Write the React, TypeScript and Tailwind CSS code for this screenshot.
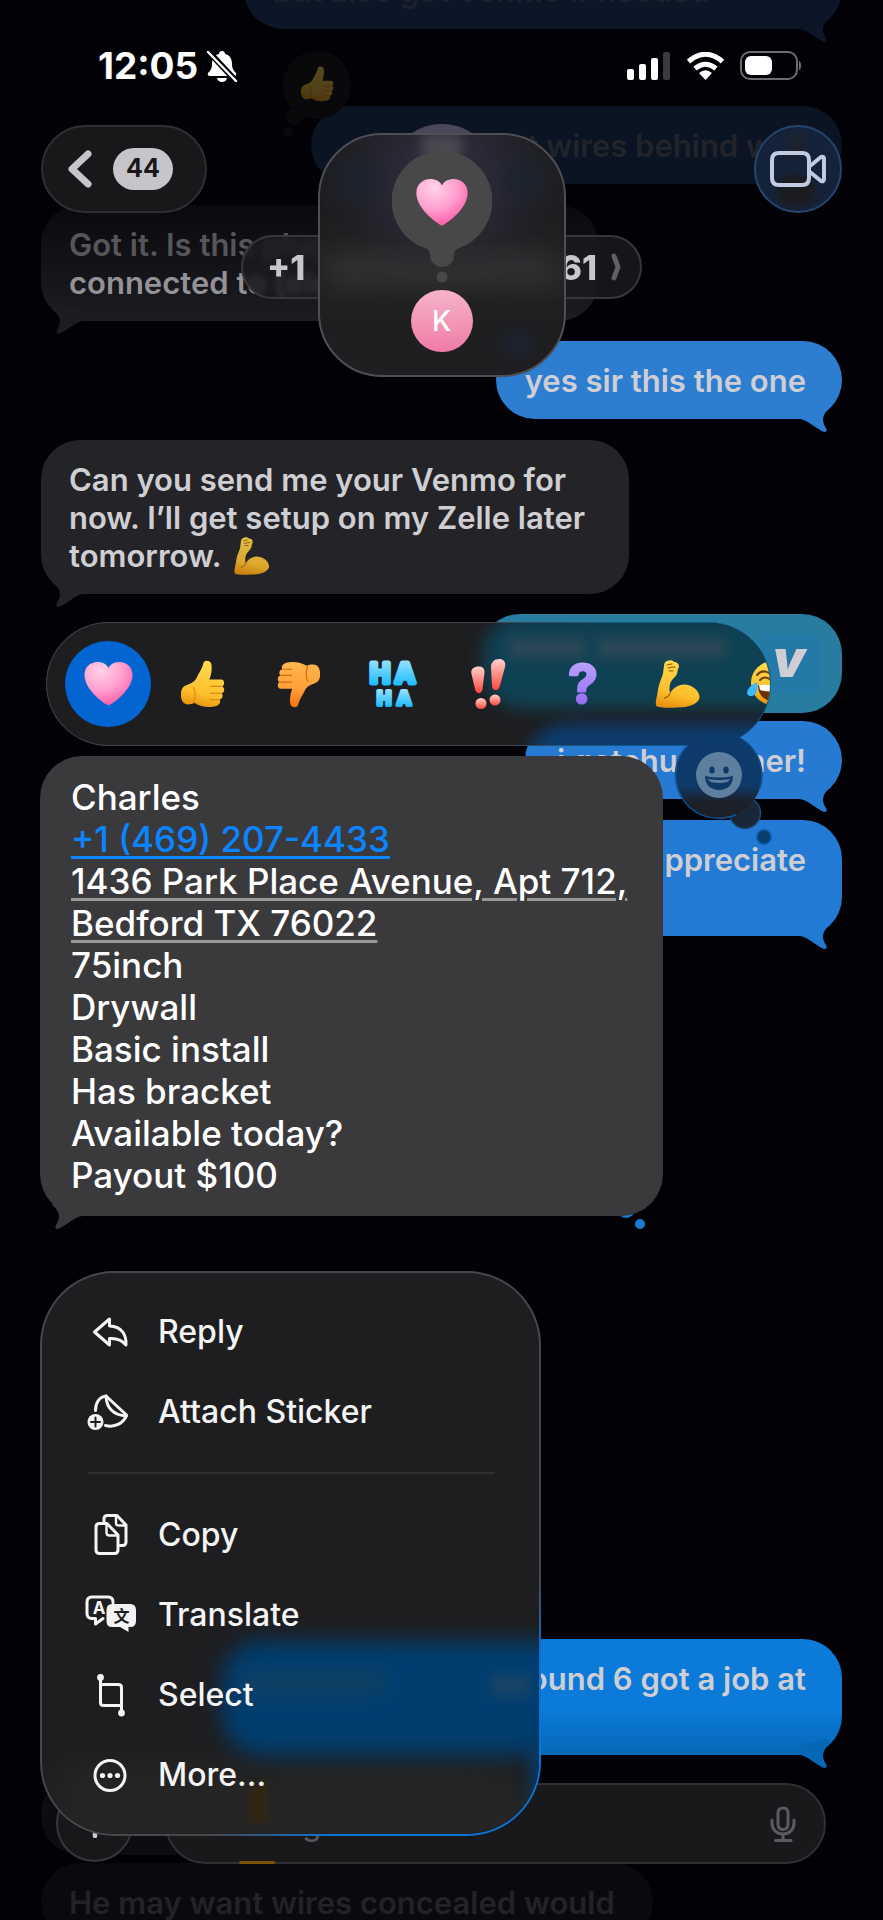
import clsx from "clsx";
import React from "react";

type BubbleProps = {
  children?: React.ReactNode;
  className?: string;
  side: "left" | "right";
  tail?: boolean;
  tailClassName?: string;
};

const Bubble: React.FC<BubbleProps> = (props) => {
  const isRight = props.side === "right";
  return (
    <div
      className={clsx(
        "relative shrink-0 rounded-[39px] pt-[21px] pb-[19px] text-[31px] leading-[38px] font-semibold whitespace-nowrap",
        isRight ? "self-end pr-9 pl-[29px]" : "self-start px-7",
        props.className,
      )}
    >
      {props.children}
      {props.tail !== false && (
        <svg
          className={clsx(
            "absolute -bottom-[13px] h-[30px] w-11",
            isRight ? "right-0" : "left-0 -scale-x-100",
            props.tailClassName,
          )}
          viewBox="0 0 44 30"
          fill="currentColor"
        >
          <path d="M2 17C10 18 18 27 26 30Q30 30 28 26C24 20 23 13 32 6L28 0L2 8Z" />
        </svg>
      )}
    </div>
  );
};

const Gradients: React.FC = () => (
  <svg className="absolute h-0 w-0" aria-hidden="true">
    <defs>
      <radialGradient id="pink" cx="0.35" cy="0.2" r="0.9">
        <stop offset="0" stopColor="#ffd3e6" />
        <stop offset="0.5" stopColor="#ff9fcf" />
        <stop offset="1" stopColor="#fb4e9c" />
      </radialGradient>
      <linearGradient id="yellow" x1="0.6" y1="0" x2="0.4" y2="1">
        <stop offset="0" stopColor="#ffdc4f" />
        <stop offset="0.7" stopColor="#fdbf2d" />
        <stop offset="1" stopColor="#e8920c" />
      </linearGradient>
      <linearGradient id="orange" x1="0.5" y1="1" x2="0.5" y2="0">
        <stop offset="0" stopColor="#ffb84d" />
        <stop offset="0.6" stopColor="#ff9f38" />
        <stop offset="1" stopColor="#f0740f" />
      </linearGradient>
      <linearGradient id="cyan" x1="0" y1="0" x2="0" y2="1">
        <stop offset="0" stopColor="#a5e6ff" />
        <stop offset="1" stopColor="#05b4ff" />
      </linearGradient>
      <linearGradient id="red" x1="0" y1="0" x2="0" y2="1">
        <stop offset="0" stopColor="#ffd2cb" />
        <stop offset="0.6" stopColor="#ff8076" />
        <stop offset="1" stopColor="#ff4438" />
      </linearGradient>
      <linearGradient id="purple" x1="0" y1="0" x2="0" y2="1">
        <stop offset="0" stopColor="#c3b0ff" />
        <stop offset="1" stopColor="#8a5cf0" />
      </linearGradient>
      <linearGradient id="bump" x1="0" y1="0" x2="0" y2="1">
        <stop offset="0" stopColor="#0d3b6c" />
        <stop offset="0.62" stopColor="#0e3a68" />
        <stop offset="0.82" stopColor="#1d2027" />
        <stop offset="1" stopColor="#1d2027" />
      </linearGradient>
    </defs>
  </svg>
);

const Heart: React.FC<{ className?: string }> = (props) => (
  <svg className={props.className} viewBox="0 0 48 44" fill="url(#pink)">
    <path d="M24 43.5C20 42 0 28 0 13C0 5 6 0 13 0C18 0 22 2 24 6C26 2 30 0 35 0C42 0 48 5 48 13C48 28 28 42 24 43.5Z" />
  </svg>
);

const Thumb: React.FC<{ className?: string; down?: boolean }> = (props) => (
  <svg className={props.className} viewBox="0 0 45 49">
    <path
      fill={props.down ? "url(#orange)" : "url(#yellow)"}
      d="M3 27C8 24 13 24 16 18C19 12 22 8 23 3C24-.5 30 0 31 4C32 9 31 15 29 20L41 20C45 20 45 26 42 27C45 28 45 33 41.500 34C43.500 36 42.500 40 39.500 40.500C41 43 39 46 36 47C30 49 20 48.500 14 44C9 46 4 46 2 43C-1 39-1 30 3 27Z"
    />
    <path
      d="M30 27H41M30 34H41M30 40.500H39M13 28Q16 36 13 43"
      fill="none"
      stroke={props.down ? "#d9640a" : "#dd8b10"}
      strokeLinecap="round"
      strokeWidth="1.2"
    />
  </svg>
);

const Bicep: React.FC<{ className?: string }> = (props) => (
  <svg className={props.className} viewBox="0 0 46 49">
    <path
      fill="url(#yellow)"
      d="M9 4C10 0 17-1 19 2C24 2 25 7 23 9L22 14C20 18 16 20 15 24C14 28 14 31 15 34C18 28 24 25 30 25C39 26 45 32 45 38C44 45 34 48.500 22 48.500C14 49 4 49 1 47C-1 45 2 36 3 28C5 20 8 16 8 11Z"
    />
    <path
      d="M12 5L17 4M13 8L20 7M14 11L18 11M15 34Q13 38 9 39"
      fill="none"
      stroke="#a8680a"
      strokeLinecap="round"
      strokeWidth="1.3"
    />
  </svg>
);

const HaHa: React.FC = () => (
  <svg className="h-[50px] w-[50px]" viewBox="0 0 50 50">
    <g
      fill="url(#cyan)"
      fontFamily="Inter, sans-serif"
      fontWeight="700"
      stroke="url(#cyan)"
      strokeLinecap="round"
      strokeLinejoin="round"
    >
      <text x="2" y="24" fontSize="27" strokeWidth="5">
        H
      </text>
      <text x="27" y="24" fontSize="27" strokeWidth="5">
        A
      </text>
      <text x="9" y="46" fontSize="19" strokeWidth="4">
        H
      </text>
      <text x="29" y="46" fontSize="19" strokeWidth="4">
        A
      </text>
    </g>
  </svg>
);

const Bangs: React.FC = () => (
  <svg className="h-[52px] w-10" viewBox="0 0 40 52" fill="url(#red)">
    <path d="M10 8.500C14.500 8 17 10.500 16.500 15L14.500 31C14 36.500 8 36.500 7 31L3.500 16C2.500 11.500 5 9 10 8.500Z" />
    <path d="M32 1C36.500 1.500 38 5 37 9L31.500 29C30 33.500 24 33 24 28L23 9C23 4 27 .500 32 1Z" />
    <circle cx="13" cy="45.500" r="5.500" />
    <circle cx="27" cy="42" r="5.500" />
  </svg>
);

const Question: React.FC = () => (
  <svg className="h-[52px] w-10" viewBox="0 0 40 52">
    <text
      x="20"
      y="45"
      fill="url(#purple)"
      fontFamily="Inter, sans-serif"
      fontSize="54"
      fontWeight="600"
      stroke="url(#purple)"
      strokeLinejoin="round"
      strokeWidth="3"
      textAnchor="middle"
    >
      ?
    </text>
  </svg>
);

const Laugh: React.FC = () => (
  <svg className="h-12 w-14" viewBox="0 0 56 48">
    <circle cx="28" cy="23" r="22" fill="url(#yellow)" />
    <path
      d="M12 15Q17 9 24 13M15 20Q20 15 26 20M32 13Q39 9 44 15"
      fill="none"
      stroke="#6b3f06"
      strokeLinecap="round"
      strokeWidth="2"
    />
    <path d="M13 25H43C43 36 37 41 28 41C19 41 13 35 13 25Z" fill="#6b3208" />
    <path d="M14 25H42V30Q28 33 15 30Z" fill="#fff" />
    <path d="M12 22C13 29 12 36 6 36C0 36 0 28 12 22Z" fill="#3db8f8" />
  </svg>
);

const StatusBar: React.FC = () => (
  <div className="flex h-[125px] items-start justify-between pt-[45px] pr-[81px] pl-[98px] text-white">
    <div className="flex items-center gap-2">
      <span className="text-[37px] leading-[42px] font-bold">12:05</span>
      <svg className="h-8 w-8" viewBox="0 0 32 32">
        <path
          d="M16 1C18 1 19 2 19 4C24 5 26 9 26 14C26 19 28 21 30 23Q31 26 28 26H4Q1 26 2 23C4 21 6 19 6 14C6 9 8 5 13 4C13 2 14 1 16 1ZM11 28H21Q20 32 16 32Q12 32 11 28Z"
          fill="#fff"
        />
        <path d="M2 1L30 31" stroke="#020206" strokeWidth="6" />
        <path d="M2 2L30 31" stroke="#fff" strokeLinecap="round" strokeWidth="2.400" />
      </svg>
    </div>
    <div className="flex items-center gap-[15px] pt-1.5">
      <svg className="h-7 w-[44px]" viewBox="0 0 44 28" fill="#fff">
        <rect x="0" y="17" width="7" height="11" rx="2" />
        <rect x="12" y="12" width="7" height="16" rx="2" />
        <rect x="24" y="6" width="7" height="22" rx="2" />
        <rect x="36" y="0" width="7" height="28" rx="2" fill="#3b3b3e" />
      </svg>
      <svg className="h-7 w-[39px]" viewBox="0 0 39 28">
        <path
          d="M2.500 9.500Q19.500-5 36.500 9.500M9 16.500Q19.500 8 30 16.500"
          fill="none"
          stroke="#fff"
          strokeWidth="5"
        />
        <path d="M19.500 28L13 21Q19.500 15.500 26 21Z" fill="#fff" />
      </svg>
      <svg className="h-[29px] w-[62px]" viewBox="0 0 62 29">
        <rect x="1" y="1" width="56" height="27" rx="9" fill="none" stroke="#6c6c70" strokeWidth="2" />
        <path d="M59.500 10Q62 14.500 59.500 19Z" fill="#6c6c70" stroke="#6c6c70" />
        <rect x="5" y="5" width="27" height="19" rx="6" fill="#fff" />
      </svg>
    </div>
  </div>
);

const Header: React.FC = () => (
  <header className="absolute inset-x-0 top-0 flex flex-col">
    <StatusBar />
    <div className="flex h-[88px] items-center justify-between px-[41px]">
      <button className="flex h-[88px] w-[166px] items-center gap-5 rounded-full border-2 border-[#2f2f31] bg-[#18181a] pl-6">
        <svg className="h-[38px] w-[26px]" viewBox="0 0 26 38">
          <path
            d="M21 4L5 19L21 34"
            fill="none"
            stroke="#c6c6ca"
            strokeLinecap="round"
            strokeLinejoin="round"
            strokeWidth="7"
          />
        </svg>
        <span className="flex h-[42px] w-[60px] items-center justify-center rounded-full bg-[#c6c6ca] text-[25px] font-bold text-[#18181a]">
          44
        </span>
      </button>
      <button
        aria-label="Video call"
        className="relative flex h-[88px] w-[88px] items-center justify-center overflow-hidden rounded-full border-2 border-[#24466e] bg-[#15233a]"
      >
        <span className="absolute bottom-1 left-5 h-8 w-10 rounded-full bg-[#1b1c20] blur-[3px]" />
        <span className="absolute top-2 left-8 h-6 w-4 bg-[#1d222c] blur-[4px]" />
        <svg className="relative h-9 w-[56px]" viewBox="0 0 56 36">
          <path
            d="M9 2H32Q39 2 39 9V27Q39 34 32 34H9Q2 34 2 27V9Q2 2 9 2ZM40 15L51 6Q54 5 54 8V28Q54 31 51 30L40 21"
            fill="none"
            stroke="#c0cbe2"
            strokeLinejoin="round"
            strokeWidth="4"
          />
        </svg>
      </button>
    </div>
    <button className="mt-[22px] flex h-16 w-[401px] items-center gap-[14px] self-center rounded-full border-2 border-[#37373b] bg-[#1c1c1f]/80 pl-6 text-[34px] font-extrabold whitespace-nowrap text-[#c8c8cc] backdrop-blur-[3px]">
      <span className="flex w-[330px] justify-between">
        <span>+1</span>
        <span>(469) 275-3161</span>
      </span>
      <svg className="h-7 w-3" viewBox="0 0 12 28">
        <path
          d="M3 3L7 14L3 25"
          fill="none"
          stroke="#606064"
          strokeLinecap="round"
          strokeLinejoin="round"
          strokeWidth="5"
        />
      </svg>
    </button>
  </header>
);

const ReactionPreview: React.FC = () => (
  <>
    <div className="absolute top-[124px] left-1/2 h-[108px] w-[108px] -translate-x-1/2 rounded-full bg-[#4b4759]" />
    <div className="absolute top-[133px] left-1/2 flex h-[244px] w-[248px] -translate-x-1/2 flex-col items-center overflow-hidden rounded-[64px] border-2 border-[#4e4e54] bg-[#1f1f21] pt-4">
      <div className="absolute -top-6 left-12 h-36 w-[150px] rounded-full bg-[#2f2b3b] blur-xl" />
      <div className="absolute top-0 left-[102px] h-6 w-10 bg-[#4b4a50] blur-[6px]" />
      <div className="absolute top-6 left-5 h-10 w-10 rounded-full bg-[#1b2430] blur-md" />
      <div className="absolute top-6 right-5 h-10 w-10 rounded-full bg-[#1b2430] blur-md" />
      <div className="absolute inset-x-0 top-[112px] h-12 bg-[#2a2a2c] blur-lg" />
      <div className="absolute inset-x-3 top-[126px] h-4 bg-[#353537] blur-md" />
      <div className="absolute right-8 bottom-5 h-6 w-7 rounded-full bg-[#1b2434] blur-[7px]" />
      <div className="relative flex flex-col items-center">
        <svg className="h-[132px] w-[100px]" viewBox="0 0 100 132" fill="#484848">
          <path d="M50 0A50 50 0 0 1 66 97.500Q62 99 62 104A12 12 0 0 1 38 104Q38 99 34 97.500A50 50 0 0 1 50 0Z" />
          <circle cx="50" cy="126" r="5.500" />
        </svg>
        <Heart className="absolute top-7 h-[47px] w-[52px]" />
        <div className="mt-[7px] flex h-[62px] w-[62px] items-center justify-center rounded-full bg-linear-to-b from-[#f5b3cb] to-[#ef7ba6] text-[28px] font-medium text-white">
          K
        </div>
      </div>
    </div>
  </>
);

const Conversation: React.FC = () => (
  <main className="flex h-full flex-col overflow-hidden px-[41px]">
    <Bubble
      side="right"
      className="-mt-[49px] w-[598px] bg-[#0d1626] text-[#1d212b]"
      tailClassName="text-[#0d1626]"
    >
      but also got Venmo if needed
    </Bubble>
    <Bubble
      side="right"
      className="mt-[77px] w-[531px] bg-[#0a1423] text-right text-[#22242a]"
      tail={false}
    >
      you want wires behind wall
      <svg
        className="absolute -top-[55px] -left-[28px] h-[86px] w-[72px]"
        viewBox="0 0 72 86"
        fill="#09090c"
      >
        <circle cx="34" cy="34" r="34" />
        <circle cx="12" cy="65" r="9" />
        <circle cx="5" cy="81" r="5" />
      </svg>
      <Thumb className="absolute -top-[40px] -left-[10px] h-9 w-[33px] opacity-30" />
    </Bubble>
    <Bubble
      side="left"
      className="mt-[21px] w-[557px] bg-linear-to-b from-[#0a0a0e] to-[#1d1d21]"
      tailClassName="text-[#1d1d21]"
    >
      <p className="text-[#56565a]">Got it. Is this plug</p>
      <p className="text-[#929297]">connected to (electric</p>
    </Bubble>
    <Bubble
      side="right"
      className="mt-5 bg-[#2d7dd1] text-[#cfced4]"
      tailClassName="text-[#2d7dd1]"
    >
      yes sir this the one
    </Bubble>
    <Bubble
      side="left"
      className="mt-[21px] w-[588px] bg-[#242428] text-[#cfcfd3]"
      tailClassName="text-[#242428]"
    >
      <p>Can you send me your Venmo for</p>
      <p>now. I’ll get setup on my Zelle later</p>
      <p className="flex gap-3">
        tomorrow.
        <Bicep className="h-[38px] w-9 opacity-85" />
      </p>
    </Bubble>
    <div className="mt-5 flex h-[99px] w-[362px] shrink-0 items-center justify-end self-end rounded-[40px] bg-[#287c9f] pr-[22px]">
      <div className="flex h-[60px] w-[62px] items-center justify-center rounded-lg bg-[#2479a6] pb-2.5 text-[52px] leading-none font-black text-[#cfced4] italic">
        v
      </div>
    </div>
    <Bubble
      side="right"
      className="mt-2 w-[317px] bg-[#277ad2] text-right text-[#cfced4]"
      tailClassName="text-[#277ad2]"
    >
      i gotchu brother!
    </Bubble>
    <Bubble
      side="right"
      className="mt-[21px] h-[116px] w-[500px] bg-[#227ad4] text-right text-[#cfced4]"
      tailClassName="text-[#227ad4]"
    >
      I really appreciate
    </Bubble>
    <Bubble
      side="right"
      className="mt-[703px] h-[116px] w-[624px] bg-linear-to-b from-[#0b7ad8] from-60% to-[#0568b6] text-right text-[#cfced4]"
      tailClassName="text-[#0568b6]"
    >
      should be done around 6 got a job at
    </Bubble>
    <div className="mt-5 h-[80px] w-[320px] shrink-0 rounded-[39px] bg-[#0d0d11]" />
    <Bubble
      side="left"
      className="mt-2 w-[612px] bg-[#0a0a0e] text-[#232327]"
      tail={false}
    >
      He may want wires concealed would
    </Bubble>
  </main>
);

const Composer: React.FC = () => (
  <footer className="absolute inset-x-0 bottom-14 flex h-[81px] items-center gap-8 pr-[57px] pl-14">
    <button
      aria-label="Add"
      className="h-[77px] w-[77px] shrink-0 rounded-full border-2 border-[#37373b] bg-[#18181b] text-[#c8c8cc]"
    >
      <svg className="mx-auto h-7 w-7" viewBox="0 0 28 28">
        <path d="M14 2V26M2 14H26" stroke="currentColor" strokeLinecap="round" strokeWidth="4.500" />
      </svg>
    </button>
    <div className="relative flex h-[81px] min-w-0 flex-1 items-center rounded-full border-2 border-[#303033] bg-[#19191b] pr-6 pl-7">
      <input
        aria-label="Message"
        className="min-w-0 flex-1 bg-transparent text-[32px] outline-none placeholder:text-[#58585c]"
        placeholder="iMessage"
      />
      <svg className="h-9 w-[34px]" viewBox="0 0 34 36">
        <path
          d="M17 2C13.500 2 12 4 12 7V18C12 21 13.500 23.500 17 23.500C20.500 23.500 22 21 22 18V7C22 4 20.500 2 17 2ZM6 14V17C6 24 11 28 17 28C23 28 28 24 28 17V14M17 28V34M9.500 34.500H25"
          fill="none"
          stroke="#5a5a60"
          strokeLinecap="round"
          strokeWidth="3"
        />
      </svg>
      <span className="absolute -bottom-0.5 left-[72px] h-[3px] w-9 rounded-full bg-[#7a5206]" />
    </div>
  </footer>
);

const reactions = [
  { label: "Love", icon: <Heart className="h-11 w-[49px]" /> },
  { label: "Like", icon: <Thumb className="h-12 w-11" /> },
  { label: "Dislike", icon: <Thumb className="h-[47px] w-[43px] rotate-180" down /> },
  { label: "Laugh", icon: <HaHa /> },
  { label: "Emphasize", icon: <Bangs /> },
  { label: "Question", icon: <Question /> },
  { label: "Strong", icon: <Bicep className="h-12 w-[46px]" /> },
  { label: "Joy", icon: <Laugh /> },
];

const ReactionBar: React.FC = () => (
  <div className="relative ml-1.5 h-[124px] w-[725px] rounded-full bg-[linear-gradient(90deg,#434347_62%,#0b5a8c_80%)] p-[1px]">
    <div className="relative flex h-[122px] items-center gap-[9px] overflow-hidden rounded-full bg-[#1e1e20] pl-[18px]">
      <div className="absolute -top-2 left-[436px] h-[94px] w-[330px] rounded-l-[40px] bg-[#0f4154] blur-[8px]" />
      <div className="absolute top-[100px] left-[480px] h-12 w-[290px] rounded-tl-[40px] bg-[#0d3b6c] blur-[8px]" />
      <div className="absolute top-[15px] left-[462px] h-5 w-[76px] bg-[#2c4854] blur-[6px]" />
      <div className="absolute top-[15px] left-[550px] h-5 w-[128px] bg-[#2c4854] blur-[6px]" />
      {reactions.map((item, index) => (
        <button
          key={item.label}
          aria-label={item.label}
          className={clsx(
            "relative flex h-[86px] w-[86px] shrink-0 items-center justify-center rounded-full",
            index === 0 && "bg-[#0365d2]",
          )}
        >
          {item.icon}
        </button>
      ))}
    </div>
    <button aria-label="Choose emoji" className="absolute top-[108px] -right-[3px] z-20 h-[118px] w-[100px]">
      <svg className="h-[118px] w-[100px]" viewBox="0 0 100 118">
        <circle cx="71" cy="83" r="15.500" fill="#1a2738" stroke="#1a4c7c" strokeWidth="1.500" />
        <circle cx="45" cy="45" r="43" fill="url(#bump)" />
        <path
          d="M12 17A43 43 0 0 0 62 84.500M86 58A43 43 0 0 0 71 11"
          fill="none"
          stroke="#0e5392"
          strokeWidth="1.500"
        />
        <circle cx="90" cy="107" r="7.500" fill="#0a3d70" stroke="#0b6cc0" strokeWidth="1.500" />
        <circle cx="45" cy="45" r="23" fill="#5f7f9f" />
        <ellipse cx="38" cy="40" rx="2.700" ry="3.500" fill="#0e3a68" />
        <ellipse cx="52" cy="40" rx="2.700" ry="3.500" fill="#0e3a68" />
        <path d="M31 46Q45 49 59 46C59 55 53 60 45 60C37 60 31 55 31 46Z" fill="#0e3a68" />
        <path d="M34 49Q45 51 56 49Q55 53 45 53Q35 53 34 49Z" fill="#5f7f9f" />
      </svg>
    </button>
  </div>
);

const details = [
  "75inch",
  "Drywall",
  "Basic install",
  "Has bracket",
  "Available today?",
  "Payout $100",
];

const SelectedMessage: React.FC = () => (
  <div className="relative mt-2.5 h-[460px] w-[623px] rounded-[42px] bg-[#3a3a3d] pt-5 pl-[31px] text-[35px] leading-[42px] font-medium whitespace-nowrap text-white">
    <p>Charles</p>
    <p>
      <a href="tel:+14692074433" className="text-[#0a84ff] underline decoration-[3px] underline-offset-4">
        +1 (469) 207-4433
      </a>
    </p>
    <p>
      <a href="#address" className="underline decoration-[#98989b] decoration-[3px] underline-offset-4">
        1436 Park Place Avenue, Apt 712,
        <br />
        Bedford TX 76022
      </a>
    </p>
    {details.map((line) => (
      <p key={line}>{line}</p>
    ))}
    <svg
      className="absolute -bottom-[13px] left-0 h-[30px] w-11 -scale-x-100 text-[#3a3a3d]"
      viewBox="0 0 44 30"
      fill="currentColor"
    >
      <path d="M2 17C10 18 18 27 26 30Q30 30 28 26C24 20 23 13 32 6L28 0L2 8Z" />
    </svg>
    <svg className="absolute right-[12px] -bottom-[14px] -z-10 h-6 w-9" viewBox="0 0 36 24" fill="#1b7ad4">
      <circle cx="11" cy="3" r="9" />
      <circle cx="25" cy="18" r="5" />
    </svg>
  </div>
);

const iconProps = {
  className: "h-12 w-12 shrink-0 overflow-visible",
  fill: "none",
  stroke: "#f4f4f5",
  strokeLinecap: "round",
  strokeLinejoin: "round",
  strokeWidth: 3,
  viewBox: "0 0 48 48",
} as const;

const ReplyIcon: React.FC = () => (
  <svg {...iconProps}>
    <path d="M23.500 11L8.500 24L23.500 37V30.500C31 30 36 32 40 37C40.500 27 36 18.500 23.500 18Z" />
  </svg>
);

const StickerIcon: React.FC = () => (
  <svg {...iconProps}>
    <path d="M9.500 22.500C9.500 15 13 9 20 8L40.500 27C38 35 29 40 19.500 37.500" />
    <path d="M20 8C20.500 20 27 27 40.500 28" />
    <circle cx="9.500" cy="34" r="8" fill="#f4f4f5" stroke="none" />
    <path d="M9.500 29.500V38.500M5 34H14" stroke="#1e1e20" strokeWidth="2" />
  </svg>
);

const CopyIcon: React.FC = () => (
  <svg {...iconProps}>
    <path d="M18 11V8Q18 4.500 21.500 4.500H31L40 14V31Q40 34.500 36.500 34.500H34" />
    <path d="M30 5V12Q30 14.500 32.500 14.500H39" strokeWidth="2.400" />
    <path d="M10 16Q10 12.500 13.500 12.500H21L32 24V39Q32 42.500 28.500 42.500H13.500Q10 42.500 10 39Z" />
    <path d="M20.500 13V21.500Q20.500 24.500 23.500 24.500H31.500" strokeWidth="2.400" />
  </svg>
);

const TranslateIcon: React.FC = () => (
  <svg {...iconProps}>
    <path
      d="M17 27.500L9.500 33V27.500H6Q1 27.500 1 22.500V11Q1 6 6 6H22Q27 6 27 11V12"
      strokeWidth="3"
    />
    <path
      d="M26 13H44Q50 13 50 19V30Q50 36 44 36H42.500V41L34 36H26Q20.500 36 20.500 30V19Q20.500 13 26 13Z"
      fill="#f4f4f5"
      stroke="none"
    />
    <g stroke="none" fontWeight="700" textAnchor="middle">
      <text x="13" y="22.500" fill="#f4f4f5" fontFamily="Inter, sans-serif" fontSize="17">
        A
      </text>
      <text x="35.500" y="30.500" fill="#1e1e20" fontFamily="'Noto Sans CJK SC', sans-serif" fontSize="16">
        文
      </text>
    </g>
  </svg>
);

const SelectIcon: React.FC = () => (
  <svg {...iconProps}>
    <path d="M14.500 7V31.500Q14.500 34.500 17.500 34.500H35.500M14.500 13.500H32.500Q35.500 13.500 35.500 16.500V42" />
    <circle cx="14.500" cy="6.500" r="3.400" fill="#f4f4f5" stroke="none" />
    <circle cx="35.500" cy="42" r="3.400" fill="#f4f4f5" stroke="none" />
  </svg>
);

const MoreIcon: React.FC = () => (
  <svg {...iconProps}>
    <circle cx="24" cy="24.500" r="15" />
    <g fill="#f4f4f5" stroke="none">
      <circle cx="16.500" cy="24.500" r="2.600" />
      <circle cx="24" cy="24.500" r="2.600" />
      <circle cx="31.500" cy="24.500" r="2.600" />
    </g>
  </svg>
);

const MenuItem: React.FC<{ icon: React.ReactNode; label: string }> = (props) => (
  <button className="flex h-20 items-center gap-6 text-left text-[32px] font-medium text-[#f4f4f5]">
    {props.icon}
    {props.label}
  </button>
);

const ContextMenu: React.FC = () => (
  <div className="mt-[55px] w-[501px] rounded-[74px] bg-[radial-gradient(270px_200px_at_85%_88%,#0a74d4_60%,#47474b_100%)] p-[2px]">
    <div className="relative overflow-hidden rounded-[72px] bg-[#1e1e20]">
      <div className="absolute top-[490px] right-0 left-4 h-24 rounded-tr-[60px] bg-[#252526] blur-lg" />
      <div className="absolute top-[368px] -right-5 left-[180px] h-[114px] rounded-l-[40px] bg-[#003e70] blur-[11px]" />
      <div className="absolute top-[470px] -right-3 h-20 w-5 bg-[#063c68] blur-[8px]" />
      <div className="absolute top-[400px] left-[200px] h-5 w-36 bg-[#11405f] blur-[9px]" />
      <div className="absolute top-[402px] right-2 h-5 w-10 bg-[#1b4566] blur-[7px]" />
      <div className="absolute top-[510px] left-[208px] h-10 w-4 bg-[#33260f] blur-[5px]" />
      <div className="relative flex flex-col px-[44px] py-[19px]">
        <MenuItem icon={<ReplyIcon />} label="Reply" />
        <MenuItem icon={<StickerIcon />} label="Attach Sticker" />
        <hr className="mt-5 mb-[21px] ml-0.5 border-t-2 border-[#303032]" />
        <MenuItem icon={<CopyIcon />} label="Copy" />
        <MenuItem icon={<TranslateIcon />} label="Translate" />
        <MenuItem icon={<SelectIcon />} label="Select" />
        <MenuItem icon={<MoreIcon />} label="More..." />
      </div>
    </div>
  </div>
);

export default function App() {
  return (
    <div className="relative h-screen overflow-hidden bg-[#020206] font-['Inter','Noto_Sans',sans-serif]">
      <Gradients />
      <Conversation />
      <Header />
      <Composer />
      <ReactionPreview />
      <section className="absolute inset-x-0 top-[622px] isolate flex flex-col items-start px-10">
        <ReactionBar />
        <SelectedMessage />
        <ContextMenu />
      </section>
    </div>
  );
}
